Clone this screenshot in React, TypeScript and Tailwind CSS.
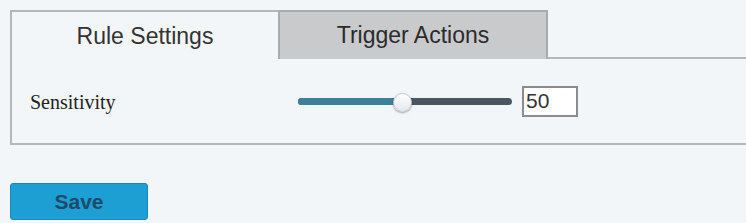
export default function App() {
  const value = 50;
  return (
    <div className="h-[223px] w-[746px] overflow-hidden bg-[#f3f6f8] pt-[10px] pl-[10px] font-['Liberation_Sans',Arial,sans-serif]">
      <div className="w-[760px] border-l-2 border-b-2 border-[#b4b6b8]">
        <div className="flex h-[49px]">
          <div className="flex w-[266px] items-center justify-center border-t-2 border-[#b4b6b8] pt-[2px] text-[23px] text-[#333]">
            Rule Settings
          </div>
          <div className="flex w-[270px] items-center justify-center border-2 border-b-0 border-[#a9abad] bg-[#c8cacc] text-[23px] text-[#2b2b2b]">
            Trigger Actions
          </div>
          <div className="flex-1 border-b-2 border-[#b4b6b8]" />
        </div>
        <div className="flex h-[84px] items-center pb-[2px] pt-[2px]">
          <div className="w-[286px] pl-[18px] pt-[2px] font-['Liberation_Serif','Times_New_Roman',serif] text-[20px] text-[#1e1e1e]">
            Sensitivity
          </div>
          <div className="relative flex h-[24px] w-[214px] items-center">
            <div className="h-[7px] w-full rounded-full bg-[#4b5660]" />
            <div
              className="absolute left-0 h-[7px] rounded-l-full bg-[#3d8196]"
              style={{ width: `${value * 2.1}px` }}
            />
            <div
              className="absolute top-[4px] h-[19px] w-[19px] rounded-full border border-[#c9cdd2] bg-gradient-to-b from-white to-[#e4e7ea] shadow-[0_1px_2px_rgba(0,0,0,0.35)]"
              style={{ left: `${value * 2.1 - 10}px` }}
            />
          </div>
          <div className="ml-[10px] flex h-[31px] w-[56px] items-center border-2 border-[#8a8c8e] bg-white pl-[2px] text-[21px] text-[#333]">
            {value}
          </div>
        </div>
      </div>
      <button className="mt-[38px] flex h-[37px] w-[138px] items-center justify-center rounded-[3px] border border-[#1789b8] bg-[#1e9fd3] text-[21px] font-bold text-[#1b4a6c]">
        Save
      </button>
    </div>
  );
}
